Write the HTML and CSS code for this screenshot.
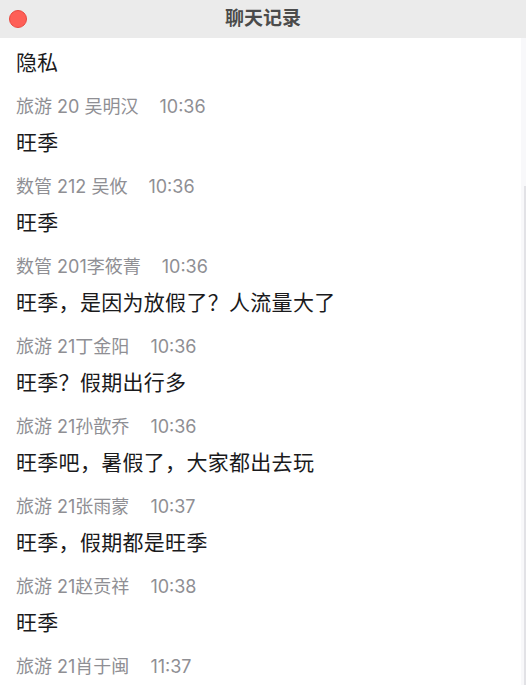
FILE: index.html
```html
<!DOCTYPE html>
<html lang="zh-CN">
<head>
    <meta charset="UTF-8">
    <title>聊天记录</title>
<link rel="stylesheet" href="styles.css">
</head>
<body>
    <div class="window">
        <div class="titlebar">
            <div class="controls"><span class="close"></span></div>
            <h1>聊天记录</h1>
            <div></div>
        </div>

        <div class="body">
            <div class="log">
                <div class="topic">隐私</div>

                <div class="entry">
                    <div class="meta">旅游 20 吴明汉<span class="time">10:36</span></div>
                    <div class="text">旺季</div>
                </div>
                <div class="entry">
                    <div class="meta">数管 212 吴攸<span class="time">10:36</span></div>
                    <div class="text">旺季</div>
                </div>
                <div class="entry">
                    <div class="meta">数管 201李筱菁<span class="time">10:36</span></div>
                    <div class="text">旺季，是因为放假了？人流量大了</div>
                </div>
                <div class="entry">
                    <div class="meta">旅游 21丁金阳<span class="time">10:36</span></div>
                    <div class="text">旺季？假期出行多</div>
                </div>
                <div class="entry">
                    <div class="meta">旅游 21孙歆乔<span class="time">10:36</span></div>
                    <div class="text">旺季吧，暑假了，大家都出去玩</div>
                </div>
                <div class="entry">
                    <div class="meta">旅游 21张雨蒙<span class="time">10:37</span></div>
                    <div class="text">旺季，假期都是旺季</div>
                </div>
                <div class="entry">
                    <div class="meta">旅游 21赵贡祥<span class="time">10:38</span></div>
                    <div class="text">旺季</div>
                </div>
                <div class="entry">
                    <div class="meta">旅游 21肖于闽<span class="time">11:37</span></div>
                </div>
            </div>

            <div class="scrollbar"><div class="thumb"></div></div>
        </div>
    </div>
</body>
</html>
```

FILE: styles.css
```css
*{
    margin: 0;
    padding: 0;
    box-sizing: border-box;
}
html, body{
    width: 100%;
    height: 100%;
    overflow: hidden;
    background: #FFF;
}
body{
    font-family: Inter, "Noto Sans CJK SC", sans-serif;
}
.window{
    width: 526px;
    height: 685px;
    display: flex;
    flex-direction: column;
}
.titlebar{
    height: 38px;
    flex: none;
    background: #ebebeb;
    display: grid;
    grid-template-columns: 1fr auto 1fr;
    align-items: center;
}
.titlebar h1{
    font-size: 19px;
    font-weight: bold;
    color: #4b4b4b;
    line-height: 38px;
}
.controls{
    padding-left: 9px;
    display: flex;
}
.close{
    width: 18px;
    height: 18px;
    border-radius: 50%;
    background: #fe5f57;
    border: 1px solid #e9483f;
}

.body{
    flex: 1;
    display: flex;
    overflow: hidden;
}
.log{
    flex: 1;
    padding: 10px 0 0 16px;
}
.topic{
    font-size: 21px;
    line-height: 30px;
    color: #1a1a1c;
}
.entry{
    margin-top: 16px;
}
.entry:first-of-type{
    margin-top: 15px;
}
.meta{
    font-size: 18px;
    line-height: 26px;
    color: #8f8f94;
}
.time{
    margin-left: 21px;
}
.text{
    margin-top: 8px;
    font-size: 21px;
    line-height: 30px;
    letter-spacing: 0.3px;
    color: #1a1a1c;
}

.scrollbar{
    width: 5px;
    flex: none;
    background: #f8f8fa;
    padding: 148px 0 0 3px;
}
.thumb{
    width: 2px;
    height: 100%;
    background: #e2e2e6;
}
```
